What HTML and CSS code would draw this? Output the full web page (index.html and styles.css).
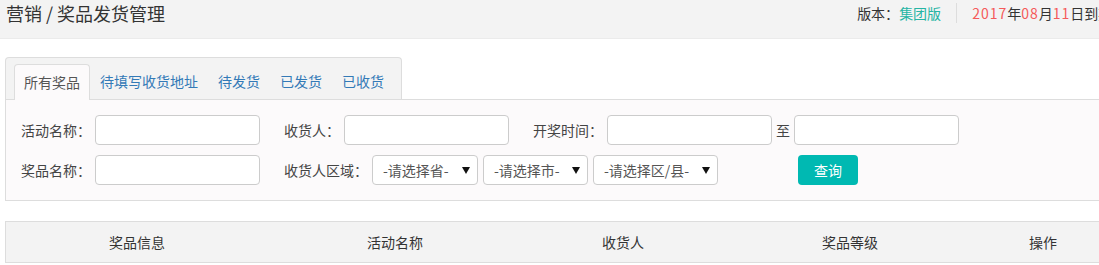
FILE: index.html
```html
<!DOCTYPE html>
<html lang="zh-CN">
<head>
<meta charset="utf-8">
<title>营销 / 奖品发货管理</title>
<link rel="stylesheet" href="styles.css">
</head>
<body>
<div class="page">
  <header class="topbar">
    <h1 class="title">营销 / 奖品发货管理</h1>
    <div class="topbar-right">
      <span class="version">版本：<span class="teal">集团版</span></span>
      <span class="divider"></span>
      <span class="expire"><span class="red">2017</span>年<span class="red">08</span>月<span class="red">11</span>日到期</span>
    </div>
  </header>

  <main class="content">
    <nav class="tabs">
      <a class="tab active">所有奖品</a>
      <a class="tab">待填写收货地址</a>
      <a class="tab">待发货</a>
      <a class="tab">已发货</a>
      <a class="tab">已收货</a>
    </nav>

    <section class="panel">
      <div class="form-row">
        <div class="field">
          <span class="label">活动名称：</span>
          <input class="input" type="text">
        </div>
        <div class="field">
          <span class="label">收货人：</span>
          <input class="input" type="text">
        </div>
        <div class="field">
          <span class="label">开奖时间：</span>
          <input class="input" type="text">
          <span class="label">至</span>
          <input class="input" type="text">
        </div>
      </div>
      <div class="form-row">
        <div class="field">
          <span class="label">奖品名称：</span>
          <input class="input" type="text">
        </div>
        <div class="field selects">
          <span class="label">收货人区域：</span>
          <span class="select-wrap w-prov"><select class="select"><option>-请选择省-</option></select></span>
          <span class="select-wrap w-city"><select class="select"><option>-请选择市-</option></select></span>
          <span class="select-wrap w-area"><select class="select"><option>-请选择区/县-</option></select></span>
        </div>
        <button class="btn-search" type="button">查询</button>
      </div>
    </section>

    <div class="table-head">
      <div class="th">奖品信息</div>
      <div class="th">活动名称</div>
      <div class="th">收货人</div>
      <div class="th">奖品等级</div>
      <div class="th">操作</div>
    </div>
  </main>
</div>
</body>
</html>
```

FILE: styles.css
```css
html, body {
  margin: 0;
  padding: 0;
  overflow: hidden;
  background: #ffffff;
}

body {
  font-family: "Noto Sans CJK SC", "Noto Sans", "Liberation Sans", sans-serif;
  font-size: 14px;
  color: #333333;
}

.page {
  width: 1120px;
}

/* ---------- top bar ---------- */
.topbar {
  display: flex;
  align-items: flex-start;
  height: 38px;
  padding: 0 6px;
  background: #f3f3f3;
  border-bottom: 1px solid #ebebeb;
}

.title {
  margin: 0;
  font-size: 18px;
  font-weight: normal;
  line-height: 26px;
  color: #333333;
}

.topbar-right {
  margin-left: 692px;
  display: flex;
  align-items: center;
  height: 26px;
  white-space: nowrap;
  flex-shrink: 0;
}

.version {
  color: #333333;
}

.teal {
  color: #26b5a4;
}

.divider {
  width: 1px;
  height: 20px;
  background: #dddddd;
  margin: 0 15px;
}

.red {
  color: #f55a5a;
  letter-spacing: 1px;
}

/* ---------- content ---------- */
.content {
  padding: 18px 0 0 5px;
}

.tabs {
  display: inline-flex;
  align-items: flex-end;
  padding: 6px 7px 0 8px;
  background: #f3f3f3;
  border: 1px solid #dddddd;
  border-bottom: none;
  border-radius: 4px 4px 0 0;
}

.tab {
  display: block;
  height: 35px;
  line-height: 35px;
  padding: 0 10px;
  color: #337ab7;
  white-space: nowrap;
  cursor: pointer;
}

.tab.active {
  position: relative;
  z-index: 1;
  height: 36px;
  line-height: 35px;
  margin-bottom: -1px;
  padding: 0 9px;
  color: #555555;
  background: #fcfafb;
  border: 1px solid #dddddd;
  border-bottom: none;
  border-radius: 4px 4px 0 0;
  box-sizing: border-box;
}

.panel {
  display: flex;
  flex-direction: column;
  gap: 10px;
  padding: 15px 15px 15px 15px;
  background: #fcfafb;
  border: 1px solid #dddddd;
}

.form-row {
  display: flex;
  align-items: center;
  gap: 24px;
  height: 30px;
}

.field {
  display: flex;
  align-items: center;
  gap: 4px;
}

.field.selects {
  gap: 5px;
}

.field.selects .label {
  margin-right: -1px;
}

.label {
  line-height: 30px;
  color: #444444;
  white-space: nowrap;
}

.input {
  box-sizing: border-box;
  width: 165px;
  height: 30px;
  margin: 0;
  padding: 0 8px;
  border: 1px solid #cccccc;
  border-radius: 4px;
  background: #ffffff;
  font: inherit;
}

.select-wrap {
  position: relative;
  display: block;
  height: 30px;
}

.select-wrap::after {
  content: "";
  position: absolute;
  top: 12px;
  right: 8px;
  border-left: 4px solid transparent;
  border-right: 4px solid transparent;
  border-top: 7px solid #111111;
  pointer-events: none;
}

.w-prov { width: 106px; }
.w-city { width: 105px; }
.w-area { width: 125px; }

.select {
  -webkit-appearance: none;
  appearance: none;
  box-sizing: border-box;
  width: 100%;
  height: 30px;
  margin: 0;
  padding: 0 0 0 10px;
  border: 1px solid #cccccc;
  border-radius: 4px;
  background: #ffffff;
  font: inherit;
  color: #555555;
}

.btn-search {
  box-sizing: border-box;
  width: 60px;
  height: 30px;
  margin: 0 0 0 56px;
  padding: 0;
  border: none;
  border-radius: 4px;
  background: #00b9b2;
  color: #ffffff;
  font: inherit;
  cursor: pointer;
}

/* ---------- table head ---------- */
.table-head {
  display: grid;
  grid-template-columns: 262px 254px 202px 252px 134px 1fr;
  margin-top: 20px;
  background: #f3f3f3;
  border: 1px solid #dddddd;
}

.th {
  height: 40px;
  line-height: 40px;
  text-align: center;
  color: #333333;
}
```
